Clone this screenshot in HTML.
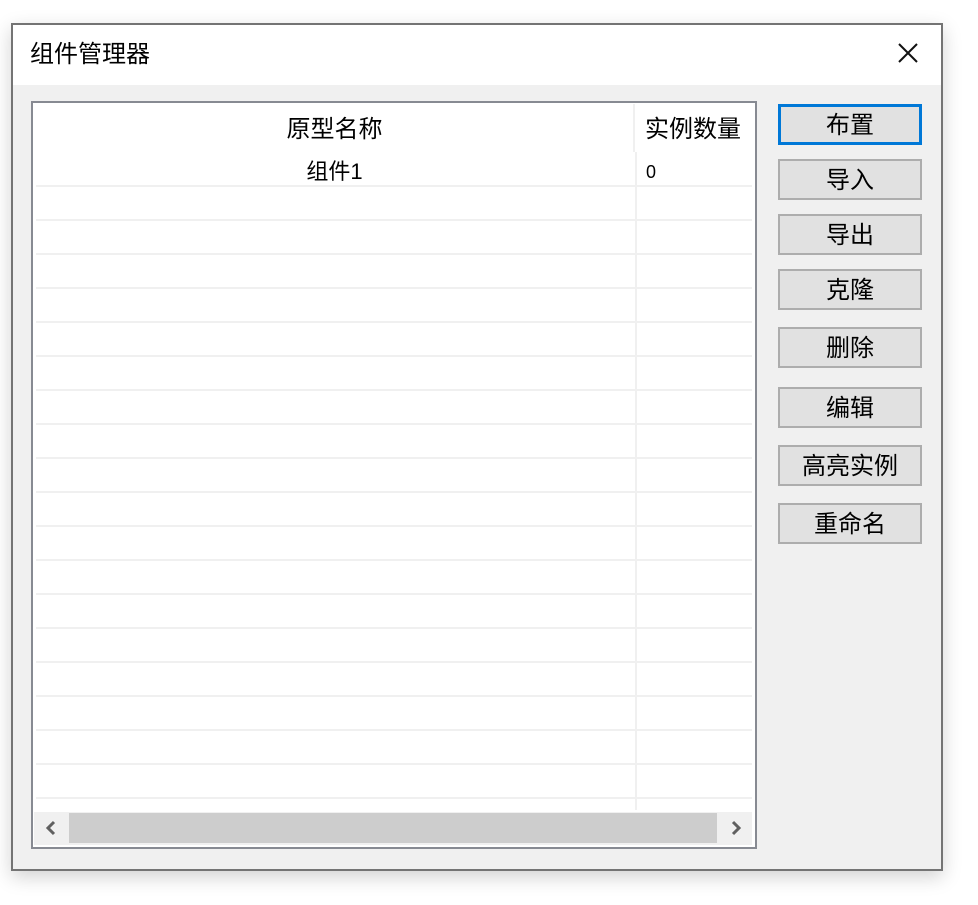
<!DOCTYPE html>
<html><head><meta charset="utf-8"><style>
body{margin:0;width:978px;height:905px;background:#fff;position:relative;overflow:hidden;font-family:"Liberation Sans","Microsoft YaHei","Noto Sans CJK SC",sans-serif;}
.a{position:absolute;box-sizing:border-box;}
.win{left:11px;top:23px;width:932px;height:848px;border:2px solid #747474;background:#f0f0f0;box-shadow:0 6px 18px rgba(0,0,0,0.18);}
.title{left:13px;top:25px;width:928px;height:60px;background:#fff;}
.tt{left:30px;top:40px;font-size:24px;color:#000;line-height:30px;}
.list{left:31px;top:101px;width:726px;height:748px;border:2px solid #878a92;background:#fff;}
.hl{left:36px;height:2px;width:716px;background:#f0f0f0;}
.btn{left:778px;width:144px;height:41px;border:2px solid #adadad;background:#e1e1e1;font-size:24px;text-align:center;line-height:39px;color:#000;}
</style></head><body>
<div class="a win"></div>
<div class="a title"></div>
<div class="a tt">组件管理器</div>
<svg class="a" style="left:896px;top:41px" width="24" height="24"><path d="M3 3L21 21M21 3L3 21" stroke="#111" stroke-width="2"/></svg>
<div class="a list"></div>
<div class="a" style="left:633px;top:104px;width:2px;height:48px;background:#f0f0f0"></div>
<div class="a" style="left:635px;top:152px;width:2px;height:658px;background:#f0f0f0"></div>
<div class="a" style="left:36px;top:115px;width:597px;text-align:center;font-size:24px;line-height:30px">原型名称</div>
<div class="a" style="left:645px;top:115px;font-size:24px;line-height:30px;white-space:nowrap">实例数量</div>
<div class="a" style="left:36px;top:157px;width:597px;text-align:center;font-size:22px;line-height:30px">组件1</div>
<div class="a" style="left:646px;top:157px;font-size:18px;line-height:30px">0</div>
<div class="a hl" style="top:185px"></div><div class="a hl" style="top:219px"></div><div class="a hl" style="top:253px"></div><div class="a hl" style="top:287px"></div><div class="a hl" style="top:321px"></div><div class="a hl" style="top:355px"></div><div class="a hl" style="top:389px"></div><div class="a hl" style="top:423px"></div><div class="a hl" style="top:457px"></div><div class="a hl" style="top:491px"></div><div class="a hl" style="top:525px"></div><div class="a hl" style="top:559px"></div><div class="a hl" style="top:593px"></div><div class="a hl" style="top:627px"></div><div class="a hl" style="top:661px"></div><div class="a hl" style="top:695px"></div><div class="a hl" style="top:729px"></div><div class="a hl" style="top:763px"></div><div class="a hl" style="top:797px"></div>
<div class="a" style="left:34px;top:812px;width:718px;height:33px;background:#f0f0f0"></div>
<div class="a" style="left:69px;top:813px;width:648px;height:30px;background:#cdcdcd"></div>
<svg class="a" style="left:44px;top:820px" width="14" height="16"><path d="M10 2L4 8L10 14" stroke="#606060" stroke-width="3" fill="none"/></svg>
<svg class="a" style="left:729px;top:820px" width="14" height="16"><path d="M4 2L10 8L4 14" stroke="#606060" stroke-width="3" fill="none"/></svg>
<div class="a btn" style="top:104px;border:3px solid #0078d7;line-height:37px">布置</div>
<div class="a btn" style="top:159px">导入</div>
<div class="a btn" style="top:214px">导出</div>
<div class="a btn" style="top:269px">克隆</div>
<div class="a btn" style="top:327px">删除</div>
<div class="a btn" style="top:387px">编辑</div>
<div class="a btn" style="top:445px">高亮实例</div>
<div class="a btn" style="top:503px">重命名</div>
</body></html>
